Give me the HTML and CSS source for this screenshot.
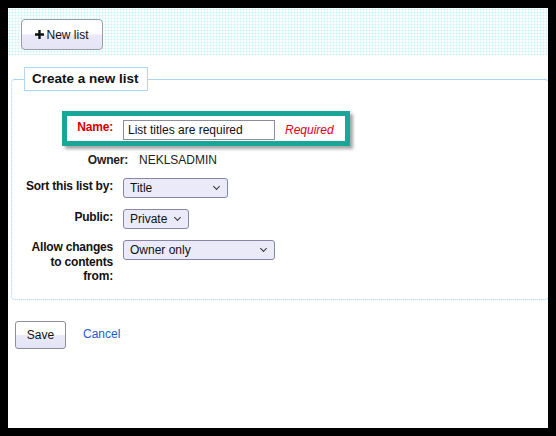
FILE: index.html
```html
<!DOCTYPE html>
<html lang="en">
<head>
<meta charset="utf-8">
<title>Create a new list</title>
<link rel="stylesheet" href="styles.css">
</head>
<body>
<div class="page">
  <div class="toolbar">
    <button class="btn btn-new" type="button">
      <svg class="plus" width="9" height="9" viewBox="0 0 9 9" aria-hidden="true"><path d="M3.3 0h2.4v3.3H9v2.4H5.7V9H3.3V5.7H0V3.3h3.3z" fill="#111"/></svg>New list
    </button>
  </div>
  <form class="main">
    <fieldset class="box">
      <legend>Create a new list</legend>
      <ol class="rows">
        <li class="row req-row">
          <label class="lbl req" for="name">Name:</label>
          <input class="text" id="name" type="text" value="List titles are required">
          <span class="required">Required</span>
        </li>
        <li class="row owner-row">
          <span class="lbl">Owner:</span>
          <span class="val">NEKLSADMIN</span>
        </li>
        <li class="row">
          <label class="lbl" for="sort">Sort this list by:</label>
          <span class="sel w-sort"><select id="sort"><option>Title</option></select></span>
        </li>
        <li class="row">
          <label class="lbl" for="pub">Public:</label>
          <span class="sel w-pub"><select id="pub"><option>Private</option></select></span>
        </li>
        <li class="row">
          <label class="lbl multi" for="allow">Allow changes to contents from:</label>
          <span class="sel w-allow"><select id="allow"><option>Owner only</option></select></span>
        </li>
      </ol>
    </fieldset>
    <div class="actions">
      <button class="btn btn-save" type="button">Save</button>
      <a class="cancel" href="#">Cancel</a>
    </div>
  </form>
</div>
</body>
</html>
```
FILE: styles.css
```css
html, body {
  margin: 0;
}
body {
  padding: 8px;
  background: #000;
  font-family: "Liberation Sans", Arial, sans-serif;
  font-size: 12px;
  color: #111;
}
.page {
  width: 540px;
  height: 420px;
  background: #fff;
  overflow: hidden;
}
.toolbar {
  height: 47px;
  box-sizing: border-box;
  padding: 11px 0 0 13px;
  background-color: #f9fefe;
  background-image: radial-gradient(circle, #c4f1f5 0.8px, transparent 1.1px);
  background-size: 3px 3px;
}
.btn {
  box-sizing: border-box;
  border: 1px solid #9c9ca6;
  border-radius: 4px;
  background: linear-gradient(#fff 48%, #e9e9f8 52%, #e4e4f6);
  font-family: "Liberation Sans", Arial, sans-serif;
  font-size: 12px;
  color: #111;
  padding: 0;
  display: inline-flex;
  align-items: center;
  justify-content: center;
}
.btn-new {
  width: 82px;
  height: 31px;
  gap: 2px;
}
.plus {
  display: block;
}
.main {
  margin: 0;
}
.box {
  margin: 12px -1px 0 3px;
  padding: 0 0 15px;
  border: 1px dotted #9fcff0;
  border-top: 1px solid #a8d4f8;
  border-radius: 4px;
  min-width: 0;
}
.box legend {
  margin-left: 12px;
  padding: 0 8px 0 7px;
  border: 1px solid #aed6f6;
  font-weight: bold;
  font-size: 13.5px;
  line-height: 22px;
  color: #111;
}
.rows {
  list-style: none;
  margin: 20px 0 0;
  padding: 0;
}
.row {
  display: grid;
  grid-template-columns: 101px auto;
  column-gap: 10px;
  align-items: start;
  justify-content: start;
  margin-top: 11px;
}
.lbl {
  text-align: right;
  font-weight: bold;
  line-height: 14px;
  padding-top: 1px;
  letter-spacing: -0.2px;
  color: #111;
}
.req-row {
  display: flex;
  width: fit-content;
  margin: 0 0 0 50px;
  border: 5px solid #17a698;
  padding: 4px 11px 1px 0;
  column-gap: 0;
  background: #fff;
  box-shadow: 3px 3px 3px rgba(0, 0, 0, 0.35);
}
.req-row .lbl {
  width: 46px;
  margin-right: 10px;
  padding-top: 0;
}
.lbl.req {
  color: #d40000;
}
.text {
  box-sizing: border-box;
  width: 152px;
  height: 20px;
  margin: 0;
  padding: 0 4px;
  border: 1px solid #8c8c9c;
  font-family: "Liberation Sans", Arial, sans-serif;
  font-size: 12px;
  color: #111;
}
.required {
  margin-left: 10px;
  line-height: 20px;
  font-style: italic;
  color: #e0001a;
}
.owner-row {
  margin-top: 7px;
  padding-left: 15px;
  column-gap: 11px;
}
.owner-row .lbl {
  padding-top: 0;
  color: #222;
}
.val {
  line-height: 14px;
  color: #222;
}
.multi {
  justify-self: end;
  max-width: 88px;
  line-height: 14.5px;
  padding-top: 0;
}
.sel {
  position: relative;
  display: inline-block;
}
.sel select {
  -webkit-appearance: none;
  appearance: none;
  box-sizing: border-box;
  width: 100%;
  height: 20px;
  margin: 0;
  padding: 0 0 0 6px;
  border: 1px solid #8686aa;
  border-radius: 3px;
  background: #eaeaf9;
  font-family: "Liberation Sans", Arial, sans-serif;
  font-size: 12px;
  color: #111;
}
.sel::after {
  content: "";
  position: absolute;
  right: 9px;
  top: 6px;
  width: 4px;
  height: 4px;
  border-right: 1.4px solid #333;
  border-bottom: 1.4px solid #333;
  transform: rotate(45deg);
  pointer-events: none;
}
.w-sort { width: 105px; }
.w-pub { width: 66px; }
.w-allow { width: 152px; }
.actions {
  display: flex;
  align-items: center;
  margin-top: 21px;
  padding-left: 7px;
}
.btn-save {
  width: 51px;
  height: 28px;
  border-color: #8e8e96;
  border-radius: 3px;
}
.cancel {
  margin-left: 17px;
  margin-top: -1px;
  color: #1d5ad4;
  text-decoration: none;
}
```
